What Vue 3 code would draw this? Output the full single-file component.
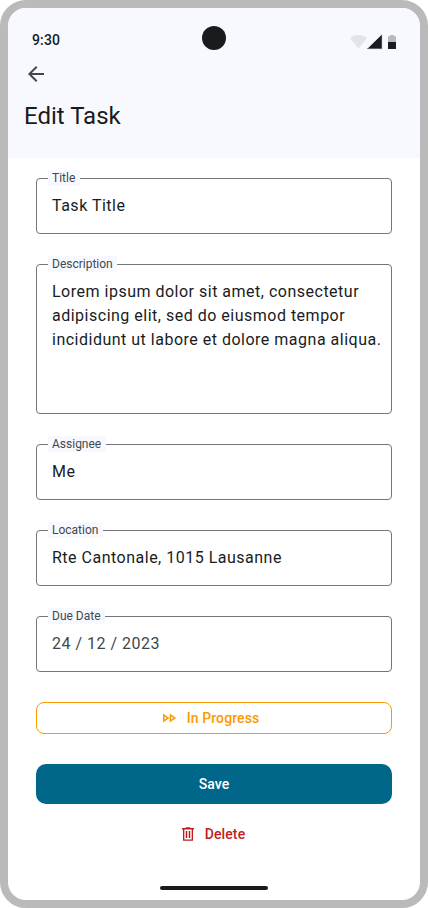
<script setup>
const fields = [
  { label: 'Title', value: 'Task Title' },
  {
    label: 'Description',
    value: 'Lorem ipsum dolor sit amet, consectetur adipiscing elit, sed do eiusmod tempor incididunt ut labore et dolore magna aliqua.',
    tall: true,
  },
  { label: 'Assignee', value: 'Me' },
  { label: 'Location', value: 'Rte Cantonale, 1015 Lausanne' },
  { label: 'Due Date', value: '24 / 12 / 2023', muted: true },
]
</script>

<template>
  <div class="device">
    <header class="top">
      <div class="status">
        <span class="time">9:30</span>
        <span class="camera"></span>
        <svg class="status-icons" width="46" height="16" viewBox="0 0 46 16">
          <path d="M0 4.2C2.4 2 5.4.9 8.5.9S14.6 2 17 4.2L8.5 14.4z" fill="#e3e4e6" />
          <path d="M17.2 15L32 .6V15z" fill="#191c1e" />
          <path d="M17.2 14.6H32" stroke="#77797c" stroke-width=".8" />
          <path d="M31.7 1V15" stroke="#77797c" stroke-width=".6" />
          <path d="M38 2.6q0-.6.6-.6H40V.9h4V2h1.400q.6 0 .6.6V8H38z" fill="#b7b9bc" />
          <path d="M38 8h8v6.400q0 .6-.6.6h-6.800q-.6 0-.6-.6z" fill="#191c1e" />
        </svg>
      </div>
      <button class="back" aria-label="Back">
        <svg width="24" height="24" viewBox="0 0 24 24">
          <path d="M7.825 13l5.600 5.600L12 20l-8-8 8-8 1.425 1.400-5.600 5.600H20v2z" fill="#40484c" />
        </svg>
      </button>
      <h1>Edit Task</h1>
    </header>

    <main class="form">
      <div v-for="f in fields" :key="f.label" class="field" :class="{ tall: f.tall }">
        <span class="label">{{ f.label }}</span>
        <span class="value" :class="{ muted: f.muted }">{{ f.value }}</span>
      </div>
      <button class="btn progress">
        <svg width="18" height="18" viewBox="0 0 24 24" fill="currentColor">
          <path d="M15 9.860 18.030 12 15 14.140V9.860m-9 0L9.030 12 6 14.140V9.860M13 6v12l8.500-6L13 6zM4 6v12l8.500-6L4 6z" />
        </svg>
        In Progress
      </button>
      <button class="btn save">Save</button>
      <button class="btn delete">
        <svg width="18" height="18" viewBox="0 0 24 24" fill="currentColor">
          <path fill-rule="evenodd" d="M6 21q-.7 0-.7-.7V6H4V4h5V3h6v1h5v2h-1.300v14.300q0 .7-.7.700zM16.900 6H7.100v13.200h9.800zM9 17.200h2V8H9zm4 0h2V8h-2z" />
        </svg>
        Delete
      </button>
    </main>

    <footer class="nav"><span class="handle"></span></footer>
  </div>
</template>

<style>
body {
  background: #fff;
}
</style>

<style scoped>
.device {
  box-sizing: border-box;
  width: 428px;
  height: 908px;
  border: 8px solid #bababa;
  border-radius: 26px;
  background: #fff;
  overflow: hidden;
  display: flex;
  flex-direction: column;
  font-family: Roboto, sans-serif;
  color: #191c1e;
}
button {
  border: 0;
  background: none;
  font: inherit;
}
.top {
  height: 150px;
  flex: none;
  background: #f8f9fe;
}
.status {
  position: relative;
  box-sizing: border-box;
  height: 52px;
  padding: 12px 24px 0;
  display: flex;
  align-items: center;
  justify-content: space-between;
}
.time {
  font-size: 14px;
  line-height: 20px;
  font-weight: 500;
  letter-spacing: 0.14px;
}
.camera {
  position: absolute;
  left: 194px;
  top: 18px;
  width: 24px;
  height: 24px;
  border-radius: 50%;
  background: #191c1e;
}
.status-icons {
  margin-top: 3px;
}
.back {
  display: flex;
  margin: 2px 0 0 16px;
  padding: 0;
}
h1 {
  margin: 14px 0 0 16px;
  font-size: 24px;
  line-height: 32px;
  font-weight: 400;
}
.form {
  flex: 1;
  display: flex;
  flex-direction: column;
  gap: 30px;
  padding: 20px 28px 0;
}
.field {
  position: relative;
  box-sizing: border-box;
  flex: none;
  height: 56px;
  padding: 15px 8px 0 15px;
  border: 1px solid #70787d;
  border-radius: 4px;
}
.field.tall {
  height: 150px;
}
.label {
  position: absolute;
  left: 11px;
  top: -9px;
  padding: 0 4.5px 0 4px;
  background: #f8f9fe;
  color: #40484c;
  font-size: 12px;
  line-height: 16px;
}
.value {
  display: block;
  font-size: 16px;
  line-height: 24px;
  letter-spacing: 0.5px;
}
.muted {
  color: #40484c;
}
.btn {
  box-sizing: border-box;
  flex: none;
  display: flex;
  align-items: center;
  justify-content: center;
  gap: 8px;
  height: 40px;
  border-radius: 10px;
  font-size: 14px;
  line-height: 20px;
  font-weight: 500;
  letter-spacing: 0.1px;
}
.progress {
  gap: 9px;
  height: 32px;
  padding: 0 25px 0 16px;
  border: 1px solid #fb9905;
  border-radius: 8px;
  color: #fb9905;
}
.save {
  padding: 0 24px;
  background: #00668a;
  color: #fff;
}
.delete {
  margin-top: -20px;
  padding: 0 16px 0 12px;
  color: #c01d20;
}
.nav {
  height: 24px;
  flex: none;
  display: flex;
  align-items: center;
  justify-content: center;
}
.handle {
  width: 108px;
  height: 4px;
  border-radius: 2px;
  background: #1d1b20;
}
</style>
